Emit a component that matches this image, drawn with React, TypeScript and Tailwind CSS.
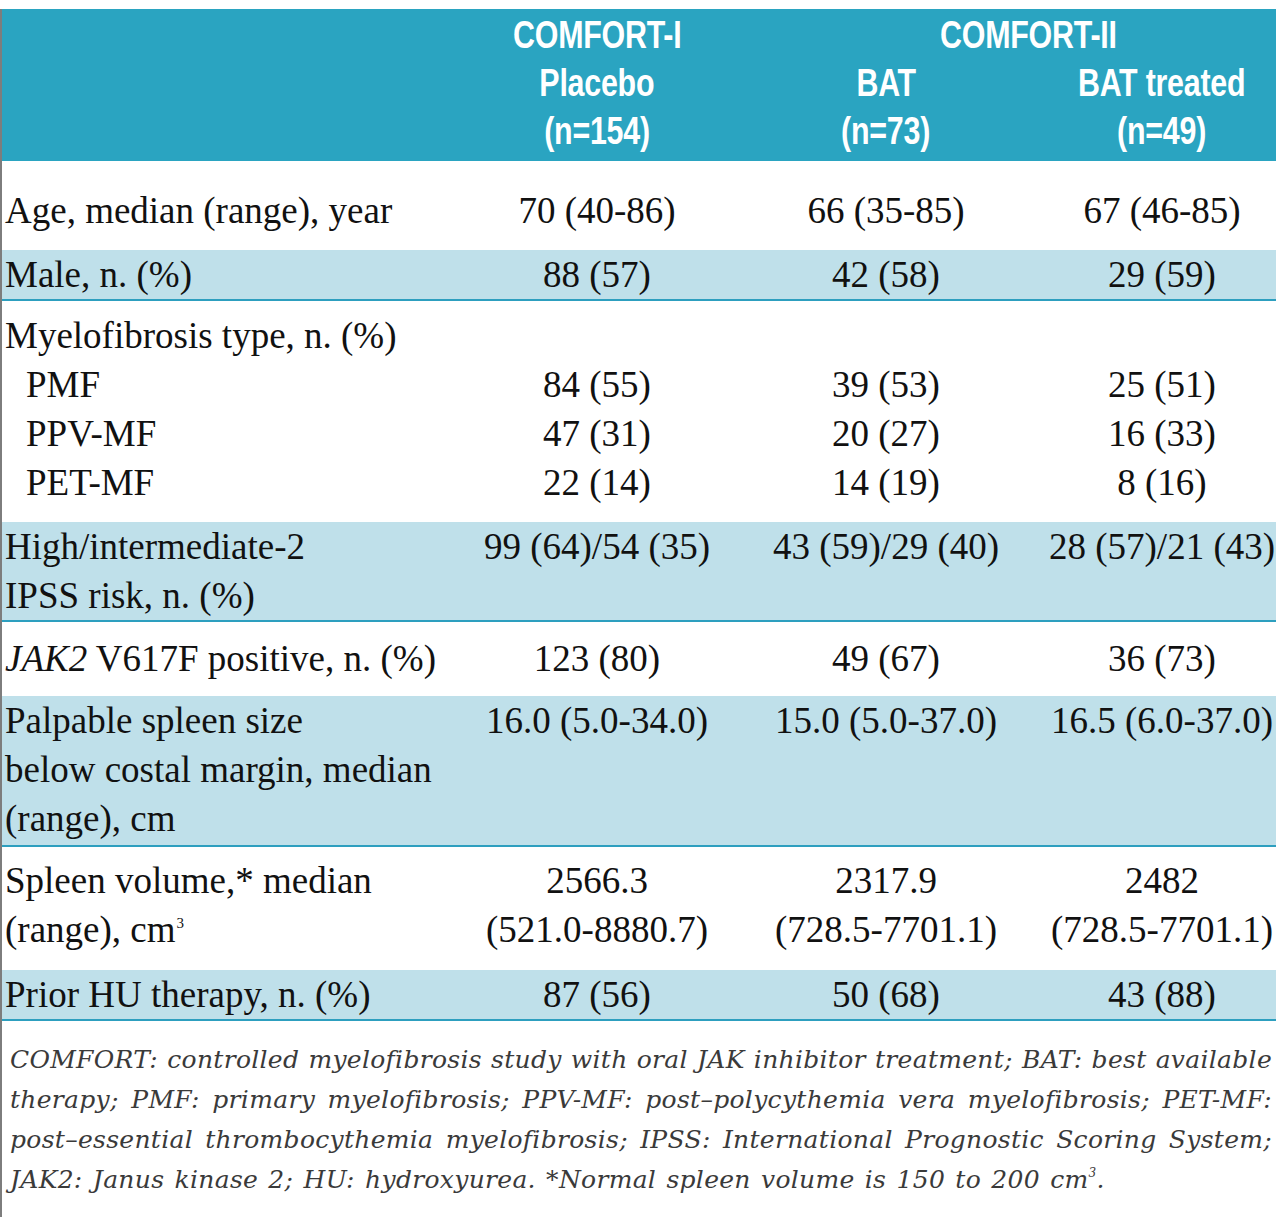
import React from 'react';

type Cell = React.ReactNode[];

type RowProps = {
  label: Cell;
  values: Cell[];
  shaded?: boolean;
  className?: string;
};

const cols = 'grid grid-cols-[468px_254px_324px_228px]';
const body = "font-['Liberation_Serif','Times_New_Roman',serif] text-[37px] leading-[49px] text-[#111]";

const Lines = ({ lines, center }: { lines: Cell; center?: boolean }) => (
  <div className={center ? 'text-center whitespace-nowrap' : 'whitespace-nowrap'}>
    {lines.map((l, i) => (
      <div key={i}>{l === '' ? '\u00a0' : l}</div>
    ))}
  </div>
);

const Row = ({ label, values, shaded, className = '' }: RowProps) => (
  <div
    className={`${cols} ${body} ${
      shaded ? 'bg-[#bfe0ea] border-b-2 border-[#2d9fbf]' : 'bg-white'
    } ${className}`}
  >
    <div className="pl-[3px]">
      <Lines lines={label} />
    </div>
    {values.map((v, i) => (
      <Lines key={i} lines={v} center />
    ))}
  </div>
);

const Indent = ({ children }: { children: React.ReactNode }) => (
  <span className="pl-[21px]">{children}</span>
);

// condensed look for the header text
const Head = ({ children }: { children: React.ReactNode }) => (
  <span className="inline-block whitespace-nowrap scale-x-[0.8]">{children}</span>
);

const App = () => {
  return (
    <div className="w-[1280px] h-[1217px] bg-white pt-[9px]">
      <div className="w-[1276px] h-[1208px] border-l-2 border-[#7d7d7d] flex flex-col">
        {/* Header band */}
        <div className="bg-[#2aa4c1] pt-[2px] pb-[6px] text-white font-['Liberation_Sans','Arial',sans-serif] font-bold text-[38px] leading-[48px] tracking-[-0.3px]">
          <div className={cols}>
            <div />
            <div className="text-center">
              <Head>COMFORT-I</Head>
            </div>
            <div className="col-span-2 text-center pl-[56px]">
              <Head>COMFORT-II</Head>
            </div>
            <div />
            <div className="text-center">
              <Head>Placebo</Head>
            </div>
            <div className="text-center">
              <Head>BAT</Head>
            </div>
            <div className="text-center">
              <Head>BAT treated</Head>
            </div>
            <div />
            <div className="text-center">
              <Head>(n=154)</Head>
            </div>
            <div className="text-center">
              <Head>(n=73)</Head>
            </div>
            <div className="text-center">
              <Head>(n=49)</Head>
            </div>
          </div>
        </div>

        <Row
          className="pt-[25px] pb-[15px]"
          label={['Age, median (range), year']}
          values={[['70 (40-86)'], ['66 (35-85)'], ['67 (46-85)']]}
        />
        <Row shaded label={['Male, n. (%)']} values={[['88 (57)'], ['42 (58)'], ['29 (59)']]} />
        <Row
          className="pt-[10px] pb-[15px]"
          label={[
            'Myelofibrosis type, n. (%)',
            <Indent key="a">PMF</Indent>,
            <Indent key="b">PPV-MF</Indent>,
            <Indent key="c">PET-MF</Indent>,
          ]}
          values={[
            ['', '84 (55)', '47 (31)', '22 (14)'],
            ['', '39 (53)', '20 (27)', '14 (19)'],
            ['', '25 (51)', '16 (33)', '8 (16)'],
          ]}
        />
        <Row
          shaded
          label={['High/intermediate-2', 'IPSS risk, n. (%)']}
          values={[['99 (64)/54 (35)'], ['43 (59)/29 (40)'], ['28 (57)/21 (43)']]}
        />
        <Row
          className="pt-[12px] pb-[13px]"
          label={[
            <span key="j">
              <i>JAK2</i> V617F positive, n. (%)
            </span>,
          ]}
          values={[['123 (80)'], ['49 (67)'], ['36 (73)']]}
        />
        <Row
          shaded
          className="pb-[2px]"
          label={['Palpable spleen size', 'below costal margin, median', '(range), cm']}
          values={[['16.0 (5.0-34.0)'], ['15.0 (5.0-37.0)'], ['16.5 (6.0-37.0)']]}
        />
        <Row
          className="pt-[9px] pb-[16px]"
          label={[
            'Spleen volume,* median',
            <span key="s">
              (range), cm<sup className="text-[15px] top-[-14px] ml-[1px]">3</sup>
            </span>,
          ]}
          values={[
            ['2566.3', '(521.0-8880.7)'],
            ['2317.9', '(728.5-7701.1)'],
            ['2482', '(728.5-7701.1)'],
          ]}
        />
        <Row shaded label={['Prior HU therapy, n. (%)']} values={[['87 (56)'], ['50 (68)'], ['43 (88)']]} />

        {/* Footnote */}
        <div className="pt-[19px] pl-[8px] pr-[4px] font-['DejaVu_Serif',serif] italic text-[25px] leading-[40px] tracking-[0.3px] text-[#3a3a3a]">
          <div className="whitespace-nowrap text-justify [text-align-last:justify]">
            COMFORT: controlled myelofibrosis study with oral JAK inhibitor treatment; BAT: best available
          </div>
          <div className="whitespace-nowrap text-justify [text-align-last:justify]">
            therapy; PMF: primary myelofibrosis; PPV-MF: post–polycythemia vera myelofibrosis; PET-MF:
          </div>
          <div className="whitespace-nowrap text-justify [text-align-last:justify]">
            post–essential thrombocythemia myelofibrosis; IPSS: International Prognostic Scoring System;
          </div>
          <div className="whitespace-nowrap [word-spacing:2px]">
            JAK2: Janus kinase 2; HU: hydroxyurea. *Normal spleen volume is 150 to 200 cm
            <sup className="text-[12px] top-[-11px]">3</sup>.
          </div>
        </div>
      </div>
    </div>
  );
};

export default App;
